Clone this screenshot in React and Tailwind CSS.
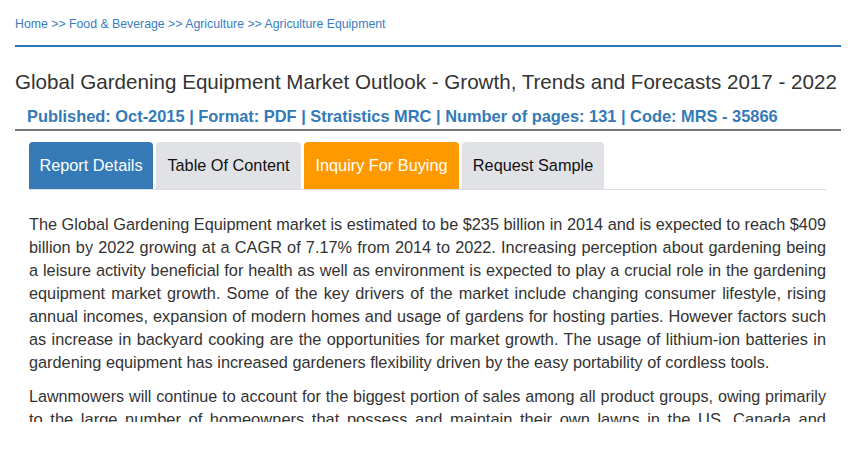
const TABS = [
  { label: 'Report Details', cls: 'w-[124px] bg-[#337ab7] text-white' },
  { label: 'Table Of Content', cls: 'w-[145px] bg-[#e1e2e5] text-[#111]' },
  { label: 'Inquiry For Buying', cls: 'w-[155px] bg-[#ff9900] text-white' },
  { label: 'Request Sample', cls: 'w-[142px] bg-[#e1e2e5] text-[#111]' },
];

export default function App() {
  return (
    <div className="h-[450px] w-[850px] bg-white" style={{ fontFamily: '"Liberation Sans", Arial, sans-serif' }}>
      <div className="h-[422px] overflow-hidden">
        {/* Breadcrumb */}
        <div className="px-[15px] pt-[17px] text-[12.3px] leading-[14px] text-[#3a7cc4]">
          Home &gt;&gt; Food &amp; Beverage &gt;&gt; Agriculture &gt;&gt; Agriculture Equipment
        </div>
        <div className="ml-[15px] mr-[9px] mt-[14px] border-b-2 border-[#2e75b6]" />

        {/* Title */}
        <h1 className="mt-[22px] px-[15px] text-[20.6px] leading-[26px] font-normal text-[#333] whitespace-nowrap">
          Global Gardening Equipment Market Outlook - Growth, Trends and Forecasts 2017 - 2022
        </h1>
        <div className="mt-[12px] pl-[27px] text-[16.4px] leading-[18px] font-bold text-[#337ab7] whitespace-nowrap">
          Published: Oct-2015 | Format: PDF | Stratistics MRC | Number of pages: 131 | Code: MRS - 35866
        </div>
        <div className="ml-[15px] mr-[9px] mt-[4px] border-b-2 border-[#777]" />

        {/* Tabs */}
        <div className="ml-[29px] mr-[24px] mt-[11px] flex gap-[3px] border-b border-[#ddd]">
          {TABS.map((t) => (
            <div
              key={t.label}
              className={`h-[47px] flex items-center justify-center rounded-t-[4px] text-[16.3px] ${t.cls}`}
            >
              {t.label}
            </div>
          ))}
        </div>

        {/* Body */}
        <div className="pl-[29px] pr-[24px] pt-[23px] text-[16.3px] leading-[23px] text-[#333] text-justify">
          <p>
            The Global Gardening Equipment market is estimated to be $235 billion in 2014 and is expected to reach $409
            billion by 2022 growing at a CAGR of 7.17% from 2014 to 2022. Increasing perception about gardening being
            a leisure activity beneficial for health as well as environment is expected to play a crucial role in the
            gardening equipment market growth. Some of the key drivers of the market include changing consumer
            lifestyle, rising annual incomes, expansion of modern homes and usage of gardens for hosting parties.
            However factors such as increase in backyard cooking are the opportunities for market growth. The usage of
            lithium-ion batteries in gardening equipment has increased gardeners flexibility driven by the easy
            portability of cordless tools.
          </p>
          <p className="mt-[11px]">
            <span className="text-[16.15px]">
              Lawnmowers will continue to account for the biggest portion of sales among all product groups, owing
              primarily
            </span>{' '}
            <span className="text-[16.5px]">
              to the large number of homeowners that possess and maintain their own lawns in the US, Canada and Europe.
              Growing popularity of robotic mowers and battery powered equipment is also expected to support demand over
              the forecast period.
            </span>
          </p>
        </div>
      </div>
    </div>
  );
}
